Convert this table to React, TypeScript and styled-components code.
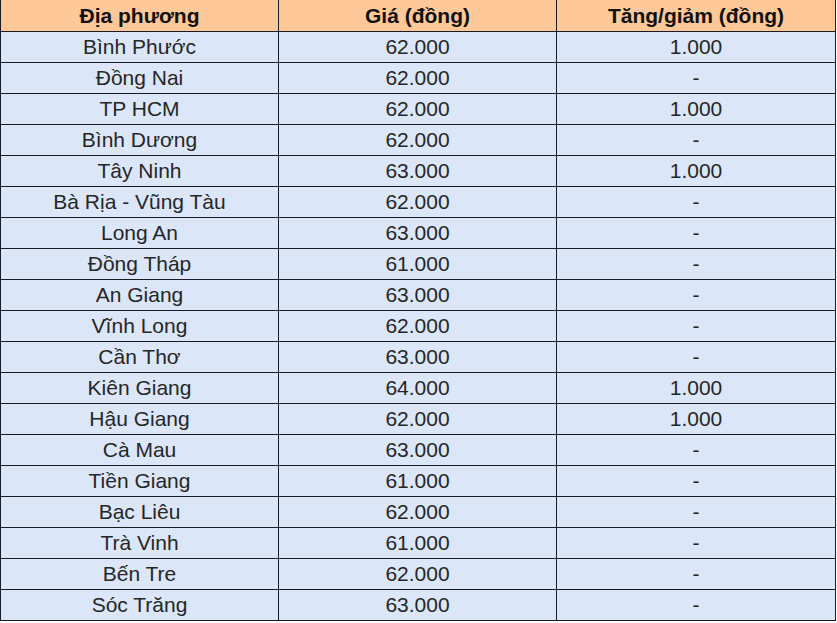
import styled, { createGlobalStyle } from "styled-components";

const GlobalStyle = createGlobalStyle`
  html, body {
    margin: 0;
    padding: 0;
    background: #ffffff;
  }
`;

type Row = { name: string; price: string; change: string };

const rows: Row[] = [
  { name: "Bình Phước", price: "62.000", change: "1.000" },
  { name: "Đồng Nai", price: "62.000", change: "-" },
  { name: "TP HCM", price: "62.000", change: "1.000" },
  { name: "Bình Dương", price: "62.000", change: "-" },
  { name: "Tây Ninh", price: "63.000", change: "1.000" },
  { name: "Bà Rịa - Vũng Tàu", price: "62.000", change: "-" },
  { name: "Long An", price: "63.000", change: "-" },
  { name: "Đồng Tháp", price: "61.000", change: "-" },
  { name: "An Giang", price: "63.000", change: "-" },
  { name: "Vĩnh Long", price: "62.000", change: "-" },
  { name: "Cần Thơ", price: "63.000", change: "-" },
  { name: "Kiên Giang", price: "64.000", change: "1.000" },
  { name: "Hậu Giang", price: "62.000", change: "1.000" },
  { name: "Cà Mau", price: "63.000", change: "-" },
  { name: "Tiền Giang", price: "61.000", change: "-" },
  { name: "Bạc Liêu", price: "62.000", change: "-" },
  { name: "Trà Vinh", price: "61.000", change: "-" },
  { name: "Bến Tre", price: "62.000", change: "-" },
  { name: "Sóc Trăng", price: "63.000", change: "-" },
];

const App = () => {
  return (
    <>
      <GlobalStyle />
      <Table>
        <colgroup>
          <col style={{ width: 278 }} />
          <col style={{ width: 278 }} />
          <col style={{ width: 279 }} />
        </colgroup>
        <thead>
          <tr>
            <HeadCell>Địa phương</HeadCell>
            <HeadCell>Giá (đồng)</HeadCell>
            <HeadCell>Tăng/giảm (đồng)</HeadCell>
          </tr>
        </thead>
        <tbody>
          {rows.map((r) => (
            <tr key={r.name}>
              <Cell>{r.name}</Cell>
              <Cell>{r.price}</Cell>
              <Cell>{r.change}</Cell>
            </tr>
          ))}
        </tbody>
      </Table>
    </>
  );
};

const Table = styled.table`
  border-collapse: collapse;
  table-layout: fixed;
  width: 836px;
  font-family: "Liberation Sans", Arial, sans-serif;
  font-size: 21px;
  color: #262626;
`;

const HeadCell = styled.th`
  height: 31px;
  padding: 0;
  background: #ffc899;
  color: #111;
  font-weight: bold;
  text-align: center;
  border: 1px solid #1b1b26;
  border-top: none;
  line-height: 31px;
`;

const Cell = styled.td`
  height: 30px;
  padding: 0;
  background: #dbe6f8;
  text-align: center;
  border: 1px solid #1b1b26;
  line-height: 30px;
  white-space: nowrap;
`;

export default App;
